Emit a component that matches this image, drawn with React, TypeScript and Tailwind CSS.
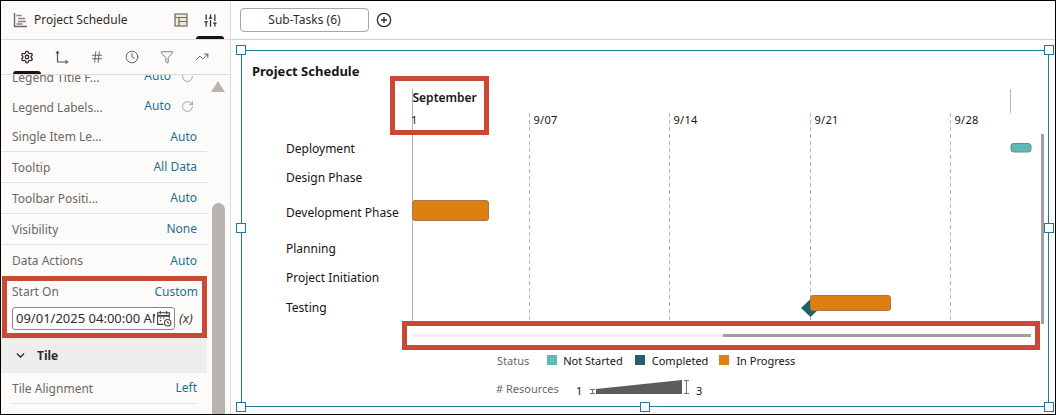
import React from "react";
import { Settings, Hash, Clock, Filter, TrendingUp, RotateCw, ChevronDown, SlidersVertical, CirclePlus } from "lucide-react";

const font = "font-['Noto_Sans','Open_Sans',sans-serif]";

function Row({ label, value, short, last }: { label: string; value: string; short?: boolean; last?: boolean }) {
  return (
    <div className={`flex items-center justify-between pl-[11px] pr-[10px] ${short ? "h-[30px]" : "h-[31px]"} ${last ? "" : "border-b border-[#e4e2df]"}`}>
      <span className="mt-[1px] text-[12px] text-[#6b6763]">{label}</span>
      <span className="text-[12px] text-[#22718f]">{value}</span>
    </div>
  );
}

function LegendRow({ label }: { label: string }) {
  return (
    <div className="flex h-[30px] items-center justify-between pl-[11px] pr-[13px]">
      <span className="mt-[1px] text-[12px] text-[#6b6763]">{label}</span>
      <span className="flex items-center">
        <span className="mt-[-3px] text-[12px] text-[#22718f]">Auto</span>
        <RotateCw className="ml-[10px] mt-[-2px] h-[13px] w-[13px] text-[#8f8b87]" strokeWidth={1.5} />
      </span>
    </div>
  );
}

function GanttIcon() {
  return (
    <svg width="15" height="16" viewBox="0 0 15 16" fill="none" stroke="#6b6763" strokeWidth="1.4">
      <path d="M1.5 1v13.5H14" />
      <path d="M3.5 3.5h5M5 6.5h7M5 9.5h8M3.5 12h6" stroke="#8a8580" />
    </svg>
  );
}

function AxisIcon() {
  return (
    <svg width="14" height="14" viewBox="0 0 14 14" fill="none" stroke="#55514d" strokeWidth="1.2">
      <path d="M2.5 2v10h9" />
      <path d="M1 3.5l1.5-2 1.5 2" />
      <path d="M10.5 10.5l2 1.5-2 1.5" />
    </svg>
  );
}

function LayoutIcon() {
  return (
    <svg width="14" height="14" viewBox="0 0 14 14" fill="none" stroke="#6f6a5e" strokeWidth="1.2">
      <rect x="1" y="1" width="12" height="12" fill="#f0e8d8" />
      <path d="M1 4.5h12M5 4.5V13M5 8.5h8" />
    </svg>
  );
}

function CalendarClock() {
  return (
    <svg className="ml-[1px] shrink-0" width="16" height="17" viewBox="0 0 15 16" fill="none" stroke="#3f3c39" strokeWidth="1">
      <path d="M7 13.5H1.5V2.5h11V8" />
      <path d="M4 1v3M10 1v3" />
      <path d="M1.5 5.5h11" strokeWidth="1.6" />
      <path d="M3.5 7.5h1.5M6.5 7.5H8M3.5 10h1.5" />
      <circle cx="11" cy="12" r="3" />
      <path d="M11 10.5V12l1.2.7" />
    </svg>
  );
}

function Handle({ className }: { className: string }) {
  return <div className={`absolute h-[10px] w-[10px] border border-[#1d7a9c] bg-white ${className}`} />;
}

const gridX = [529.5, 669.5, 810.5, 950.5];
const gridLabels = ["9/07", "9/14", "9/21", "9/28"];
const tasks: [string, number][] = [
  ["Deployment", 148],
  ["Design Phase", 177],
  ["Development Phase", 212],
  ["Planning", 248],
  ["Project Initiation", 277],
  ["Testing", 307],
];

function Chart() {
  return (
    <svg className="absolute left-0 top-0" width="1056" height="415" viewBox="0 0 1056 415">
      <line x1="412.5" y1="89" x2="412.5" y2="321" stroke="#b5b5b5" />
      {gridX.map((x) => (
        <line key={x} x1={x} y1="113" x2={x} y2="321" stroke="#b5b5b5" strokeDasharray="4 3" />
      ))}
      <line x1="1010.5" y1="89" x2="1010.5" y2="113" stroke="#b5b5b5" />
      <text x="412.5" y="102" fontSize="12" fontWeight="600" fill="#161513" fontFamily="Noto Sans">September</text>
      <text x="411" y="124" fontSize="11" fill="#161513" fontFamily="Noto Sans">1</text>
      {gridX.map((x, i) => (
        <text key={x} x={x + 4} y="124" fontSize="11" letterSpacing=".3" fill="#161513" fontFamily="Noto Sans">{gridLabels[i]}</text>
      ))}
      {tasks.map(([t, y]) => (
        <text key={t} x="286" y={y + 4.5} fontSize="12" fill="#161513" fontFamily="Noto Sans">{t}</text>
      ))}
      <rect x="1011" y="143.5" width="20" height="8.5" rx="2.5" fill="#5fb9b4" stroke="#6b8a88" />
      <rect x="412.5" y="200.5" width="76" height="20" rx="2.5" fill="#de7f11" stroke="#a5794a" />
      <polygon points="810.5,299 820,308 810.5,317 801,308" fill="#23606b" />
      <rect x="810.5" y="295.5" width="80" height="15" rx="2.5" fill="#de7f11" stroke="#a5794a" />
      <rect x="412" y="334" width="619" height="3" fill="#efefef" />
      <rect x="723" y="334" width="308" height="3" fill="#9e9e9e" />
      <rect x="1041" y="134" width="3" height="190" fill="#a0a0a0" />
      <polygon points="596,389 682,380 682,394 596,394" fill="#5c5c5c" />
      <path d="M590 389.5h5M590 393.5h5M592.5 389.5v4" stroke="#7a6f7f" fill="none" />
      <path d="M684 380.5h5M684 393.5h5M686.5 380.5v13" stroke="#7a6f7f" fill="none" />
    </svg>
  );
}

export default function App() {
  return (
    <div className={`${font} flex h-[415px] w-[1056px] overflow-hidden border border-black bg-white`}>
      <aside className="flex w-[230px] shrink-0 flex-col border-r border-[#dcdad7] bg-[#fcfbfa]">
        <div className="relative flex h-[39px] shrink-0 items-center border-b border-[#dedcd9] pl-[12px]">
          <GanttIcon />
          <span className="ml-[6px] text-[12px] text-[#2f2c2a]">Project Schedule</span>
          <div className="ml-auto mr-[12px] flex items-center gap-[15px]">
            <LayoutIcon />
            <SlidersVertical className="h-[15px] w-[15px] text-[#2f2c2a]" strokeWidth={2} />
          </div>
          <div className="absolute bottom-0 right-[6px] h-[3px] w-[28px] rounded-t-full bg-[#161513]" />
        </div>
        <div className="relative flex h-[35px] shrink-0 items-center justify-between border-b border-[#dedcd9] pl-[19px] pr-[21px]">
          <Settings className="h-[14px] w-[14px] text-[#2f2c2a]" strokeWidth={2.2} />
          <AxisIcon />
          <Hash className="h-[14px] w-[14px] text-[#55514d]" strokeWidth={1.5} />
          <Clock className="h-[14px] w-[14px] text-[#55514d]" strokeWidth={1.5} />
          <Filter className="h-[14px] w-[14px] text-[#55514d]" strokeWidth={1.3} />
          <TrendingUp className="h-[14px] w-[14px] text-[#55514d]" strokeWidth={1.5} />
          <div className="absolute bottom-0 left-[12px] h-[3px] w-[28px] rounded-t-full bg-[#161513]" />
        </div>
        <div className="flex min-h-0 flex-1">
          <div className="w-[206px] shrink-0 overflow-hidden">
            <div className="mt-[-13px]">
              <LegendRow label="Legend Title F..." />
              <LegendRow label="Legend Labels..." />
              <Row label="Single Item Le..." value="Auto" short />
              <Row label="Tooltip" value="All Data" />
              <Row label="Toolbar Positi..." value="Auto" />
              <Row label="Visibility" value="None" />
              <Row label="Data Actions" value="Auto" last />
              <div className="ml-px h-[62px] border-[5px] border-[#c84a35] pl-[5px] pr-[4px]">
                <div className="mb-[4px] flex h-[22px] items-center justify-between">
                  <span className="text-[12px] text-[#6b6763]">Start On</span>
                  <span className="mt-[-1px] text-[12px] text-[#22718f]">Custom</span>
                </div>
                <div className="flex items-center">
                  <div className="flex h-[23px] w-[163px] items-center overflow-hidden rounded-[3px] border border-[#8a8683] bg-white pl-[3px]">
                    <span className="w-[139px] shrink-0 overflow-hidden whitespace-nowrap text-[13px] text-[#2f2c2a]">09/01/2025 04:00:00 AM</span>
                    <CalendarClock />
                  </div>
                  <span className="ml-[4px] text-[13px] italic text-[#3f3c39]">(x)</span>
                </div>
              </div>
              <div className="flex h-[35px] items-center bg-[#f0eeec] pl-[13px]">
                <ChevronDown className="h-[13px] w-[13px] text-[#161513]" strokeWidth={2.4} />
                <span className="ml-[10px] mt-[1px] text-[12px] font-bold text-[#2f2c2a]">Tile</span>
              </div>
              <div className="mx-[11px] mr-[10px] flex h-[31px] items-center justify-between border-b border-[#e4e2df]">
                <span className="mt-[1px] text-[12px] text-[#6b6763]">Tile Alignment</span>
                <span className="text-[12px] text-[#22718f]">Left</span>
              </div>
            </div>
          </div>
          <div className="relative w-[23px] shrink-0">
            <div className="absolute left-[4px] top-[6px] h-0 w-0 border-x-[7.5px] border-b-[11px] border-x-transparent border-b-[#b9b4b0]" />
            <div className="absolute bottom-0 left-[5px] top-[128px] w-[13px] rounded-t-full bg-[#b9b4b0]" />
          </div>
        </div>
      </aside>
      <main className="relative min-w-0 flex-1">
        <div className="flex h-[39px] items-center border-b border-[#d4d2cf] pl-[9px]">
          <div className="flex h-[24px] w-[129px] items-center justify-center rounded-[4px] border border-[#a8a5a2] text-[12px] text-[#2f2c2a]">Sub-Tasks (6)</div>
          <CirclePlus className="ml-[7px] h-[16px] w-[16px] text-[#2f2c2a]" strokeWidth={2} />
        </div>
      </main>
      <div className="pointer-events-none absolute left-0 top-0 h-[415px] w-[1056px]">
        <div className="absolute left-[241px] top-[50px] h-[357px] w-[808px] border border-[#1d7a9c]" />
        <Handle className="left-[236px] top-[45px]" />
        <Handle className="left-[1044px] top-[45px]" />
        <Handle className="left-[236px] top-[223px]" />
        <Handle className="left-[1044px] top-[223px]" />
        <Handle className="left-[236px] top-[402px]" />
        <Handle className="left-[640px] top-[402px]" />
        <Handle className="left-[1044px] top-[402px]" />
        <Chart />
        <div className="absolute left-[252px] top-[62px] text-[13px] font-bold leading-[18px] text-[#161513]">Project Schedule</div>
        <div className="absolute left-[390px] top-[76px] h-[59px] w-[99px] border-[5px] border-[#c84a35]" />
        <div className="absolute left-[402px] top-[321px] h-[29px] w-[638px] border-[5px] border-[#c84a35]" />
        <div className="absolute left-[497px] top-[352px] flex h-[18px] items-center text-[11px] text-[#6b6763]">
          <span>Status</span>
          <span className="ml-[18px] mt-[-2px] h-[10px] w-[10px] bg-[#5fb9b4]" />
          <span className="ml-[6px] text-[#161513]">Not Started</span>
          <span className="ml-[12px] mt-[-2px] h-[10px] w-[10px] bg-[#23606b]" />
          <span className="ml-[7px] text-[#161513]">Completed</span>
          <span className="ml-[11px] mt-[-2px] h-[10px] w-[10px] bg-[#de7f11]" />
          <span className="ml-[7px] text-[#161513]">In Progress</span>
        </div>
        <div className="absolute left-[496px] top-[380px] text-[11px] leading-[18px] text-[#6b6763]">
          # Resources
        </div>
        <div className="absolute left-[576px] top-[382px] text-[11px] leading-[18px] text-[#161513]">1</div>
        <div className="absolute left-[696px] top-[382px] text-[11px] leading-[18px] text-[#161513]">3</div>
      </div>
    </div>
  );
}
